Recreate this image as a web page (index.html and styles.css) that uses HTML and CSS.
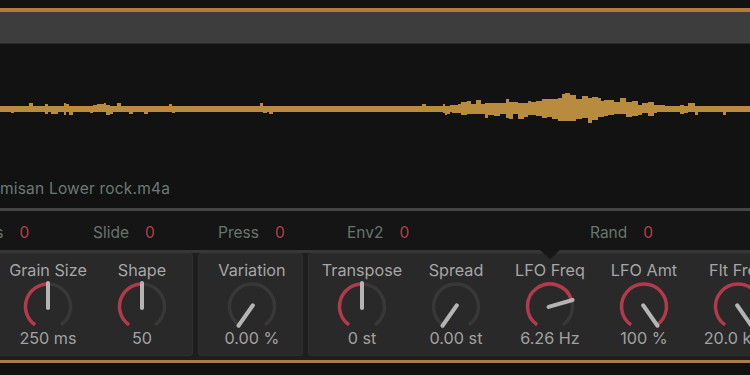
FILE: index.html
```html
<!DOCTYPE HTML>
<html>
<head>
<meta charset="utf-8">
<title>Granulator</title>
<link rel="stylesheet" href="styles.css">
</head>

<body>
<div class="wrap">
    <div class="top_gap"></div>
    <div class="title_bar"></div>

    <section class="sample">
        <svg id="wave" class="wave" width="750" height="135" viewBox="0 0 750 135"></svg>
        <p class="file_name">misan Lower rock.m4a</p>
    </section>

    <ul class="mod_row">
        <li class="mod_cell"><span class="mod_name">Keys</span><span class="mod_val">0</span></li>
        <li class="mod_cell"><span class="mod_name">Slide</span><span class="mod_val">0</span></li>
        <li class="mod_cell mod_wide"><span class="mod_name">Press</span><span class="mod_val">0</span></li>
        <li class="mod_cell"><span class="mod_name">Env2</span><span class="mod_val">0</span></li>
        <li class="mod_cell mod_narrow"></li>
        <li class="mod_cell"><span class="mod_name">Rand</span><span class="mod_val">0</span></li>
    </ul>

    <section class="devices">
        <i class="notch"></i>
        <div class="panels">
            <div class="panel">
                <div class="knob" data-value="0.5">
                    <p class="knob_name">Grain Size</p><svg class="dial" width="54" height="48" viewBox="0 0 54 48"></svg><p class="knob_val">250 ms</p>
                </div>
                <div class="knob" data-value="0.5">
                    <p class="knob_name">Shape</p><svg class="dial" width="54" height="48" viewBox="0 0 54 48"></svg><p class="knob_val">50</p>
                </div>
            </div>
            <div class="panel">
                <div class="knob" data-value="0">
                    <p class="knob_name">Variation</p><svg class="dial" width="54" height="48" viewBox="0 0 54 48"></svg><p class="knob_val">0.00 %</p>
                </div>
            </div>
            <div class="panel">
                <div class="knob" data-value="0.5">
                    <p class="knob_name">Transpose</p><svg class="dial" width="54" height="48" viewBox="0 0 54 48"></svg><p class="knob_val">0 st</p>
                </div>
                <div class="knob" data-value="0">
                    <p class="knob_name">Spread</p><svg class="dial" width="54" height="48" viewBox="0 0 54 48"></svg><p class="knob_val">0.00 st</p>
                </div>
                <div class="knob" data-value="0.755">
                    <p class="knob_name">LFO Freq</p><svg class="dial" width="54" height="48" viewBox="0 0 54 48"></svg><p class="knob_val">6.26 Hz</p>
                </div>
                <div class="knob" data-value="1">
                    <p class="knob_name">LFO Amt</p><svg class="dial" width="54" height="48" viewBox="0 0 54 48"></svg><p class="knob_val">100 %</p>
                </div>
                <div class="knob" data-value="1">
                    <p class="knob_name">Flt Freq</p><svg class="dial" width="54" height="48" viewBox="0 0 54 48"></svg><p class="knob_val">20.0 kHz</p>
                </div>
            </div>
        </div>
    </section>
</div>
<script src="script.js"></script>
</body>
</html>
```

FILE: styles.css
```css
* {
	margin:0;
	padding:0;
	box-sizing:border-box;
}
body {
	background:#121212;
	font-family:"Inter", "Liberation Sans", sans-serif;
	font-size:15px;
}
.wrap {
	width:750px;
	height:375px;
	overflow:hidden;
}
.top_gap {
	height:8px;
}
.title_bar {
	height:36px;
	background:#3d3d3d;
	border-top:4px solid #b27c38;
	border-bottom:1px solid #2a2a2a;
}
.sample {
	height:167px;
	padding-bottom:9px;
	border-bottom:3px solid #454545;
}
.wave {
	display:block;
}
.file_name {
	height:20px;
	line-height:20px;
	font-size:15.5px;
	color:#6b7a72;
	letter-spacing:0.2px;
	white-space:nowrap;
}
.mod_row {
	list-style:none;
	display:flex;
	height:39px;
	padding-top:3px;
	align-items:center;
	margin-left:-32px;
	background:#151515;
	font-size:15.5px;
}
.mod_cell {
	width:125px;
	flex-shrink:0;
	white-space:nowrap;
}
.mod_wide {
	width:129px;
}
.mod_narrow {
	width:118px;
}
.mod_name {
	color:#67766c;
	margin-right:16px;
}
.mod_val {
	color:#b3404f;
}
.devices {
	position:relative;
	background:#1e1e1e;
	border-top:3px solid #363636;
	border-bottom:3px solid #b27c38;
	padding-bottom:4px;
}
.notch {
	position:absolute;
	left:540px;
	top:-3px;
	width:0;
	height:0;
	border-left:10px solid transparent;
	border-right:10px solid transparent;
	border-top:9px solid #171717;
}
.panels {
	display:flex;
	gap:5px;
	margin-left:-6px;
}
.panel {
	display:flex;
	flex-shrink:0;
	padding:7px 4px 8px 7px;
	background:#292929;
	border-radius:4px;
	box-shadow:inset 0 0 0 1px #2f2f2f;
}
.knob {
	width:94px;
	display:flex;
	flex-direction:column;
	align-items:center;
}
.knob_name,
.knob_val {
	height:20px;
	line-height:20px;
	font-size:16.2px;
	white-space:nowrap;
	text-align:center;
}
.knob_name {
	color:#a6a6a6;
}
.knob_val {
	color:#a2a2a2;
}
.dial {
	display:block;
}
```

FILE: script.js
```js
// waveform
(function(){
	var wave = document.getElementById('wave');
	var seed = 23;
	function rnd(){
		seed = seed * 16807 % 2147483647;
		return seed / 2147483647;
	}
	function busy(x){
		return (x > 25 && x < 120) || (x > 440 && x < 700);
	}
	function g(x, c, s){
		return Math.exp(-Math.pow((x - c) / s, 2));
	}
	var mid = 65, d = '', x = 0;
	while(x < 750){
		var main = x > 455 && x < 650;
		var w = main ? 3 + Math.floor(rnd() * 4) : 2 + Math.floor(rnd() * 3);
		var p = busy(x) ? 0.3 : 0.06;
		var up = 2.8 + rnd() * 0.4, dn = 2.8 + rnd() * 0.4;
		if(rnd() < p){ up += 1 + rnd() * 2.5; }
		if(rnd() < p){ dn += 1 + rnd() * 2; }
		var b = 2 * g(x, 480, 22) + 6.5 * g(x, 565, 62) + 3 * g(x, 572, 25);
		up += b * (0.75 + rnd() * 0.4);
		dn += b * (0.6 + rnd() * 0.45);
		up += 5 * g(x, 505, 3) + 5 * g(x, 622, 3) + 3 * g(x, 565, 3);
		dn += 4 * g(x, 505, 3) + 3 * g(x, 588, 4);
		d += 'M' + x + ' ' + Math.round(mid - up) + 'h' + w + 'V' + Math.round(mid + dn) + 'h' + (-w) + 'z';
		x += w;
	}
	wave.innerHTML = '<path d="' + d + '" fill="#b98b3e" shape-rendering="crispEdges"/>';
})();

// knobs
(function(){
	var cx = 27, cy = 26.5, r = 22.5;
	function pt(a, rad){
		var t = a * Math.PI / 180;
		return (cx + rad * Math.sin(t)).toFixed(2) + ' ' + (cy - rad * Math.cos(t)).toFixed(2);
	}
	function arc(a0, a1){
		var large = (a1 - a0) > 180 ? 1 : 0;
		return 'M' + pt(a0, r) + 'A' + r + ' ' + r + ' 0 ' + large + ' 1 ' + pt(a1, r);
	}
	var knobs = document.querySelectorAll('.knob');
	for(var i = 0; i < knobs.length; i++){
		var v = parseFloat(knobs[i].getAttribute('data-value'));
		var av = -145 + v * 290;
		var html = '';
		if(av < 145){
			html += '<path d="' + arc(av, 145) + '" fill="none" stroke="#383838" stroke-width="3.5"/>';
		}
		if(v > 0){
			html += '<path d="' + arc(-145, av) + '" fill="none" stroke="#b13b4d" stroke-width="3.5"/>';
		}
		html += '<path d="M' + pt(av + 180, 1.5) + 'L' + pt(av, 23.5) + '" stroke="#b4b4b4" stroke-width="4" stroke-linecap="round"/>';
		knobs[i].querySelector('.dial').innerHTML = html;
	}
})();
```
